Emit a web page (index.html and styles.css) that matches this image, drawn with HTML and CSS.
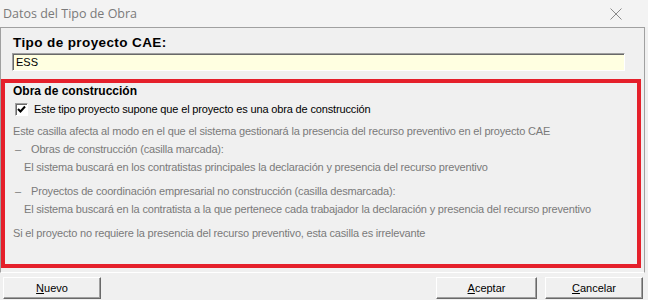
FILE: index.html
```html
<!DOCTYPE html>
<html lang="es">
<head>
    <meta charset="UTF-8">
    <title>Datos del Tipo de Obra</title>
    <link rel="stylesheet" href="styles.css">
</head>
<body>
<div class="window">
    <!--barra de titulo-->
    <div class="titlebar">
        <span class="title">Datos del Tipo de Obra</span>
        <svg class="close" width="12" height="12" viewBox="0 0 12 12">
            <path d="M0.5 0.5 L11.5 11.5 M11.5 0.5 L0.5 11.5" stroke="#8a8a8a" stroke-width="1" fill="none"/>
        </svg>
    </div>

    <div class="panel">
        <div class="field-label">Tipo de proyecto CAE:</div>
        <div class="field-input">ESS</div>

        <!--obra de construccion-->
        <div class="obra">
            <div class="obra-title">Obra de construcción</div>
            <label class="check-row">
                <span class="check">
                    <svg width="9" height="9" viewBox="0 0 9 9">
                        <path d="M1 4 L3.5 6.5 L8 1.5" stroke="#000" stroke-width="2" fill="none"/>
                    </svg>
                </span>
                Este tipo proyecto supone que el proyecto es una obra de construcción
            </label>
            <div class="help">
                <p>Este casilla afecta al modo en el que el sistema gestionará la presencia del recurso preventivo en el proyecto CAE</p>
                <div class="help-item">
                    <p><span class="dash">–</span>Obras de construcción (casilla marcada):</p>
                    <p class="sub">El sistema buscará en los contratistas principales la declaración y presencia del recurso preventivo</p>
                </div>
                <div class="help-item">
                    <p><span class="dash">–</span>Proyectos de coordinación empresarial no construcción (casilla desmarcada):</p>
                    <p class="sub">El sistema buscará en la contratista a la que pertenece cada trabajador la declaración y presencia del recurso preventivo</p>
                </div>
                <p class="last">Si el proyecto no requiere la presencia del recurso preventivo, esta casilla es irrelevante</p>
            </div>
        </div>
    </div>

    <div class="buttons">
        <button class="btn"><u>N</u>uevo</button>
        <span class="spacer"></span>
        <button class="btn btn-wide"><u>A</u>ceptar</button>
        <button class="btn"><u>C</u>ancelar</button>
    </div>
</div>
</body>
</html>
```

FILE: styles.css
```css
* {
    padding: 0;
    margin: 0;
    box-sizing: border-box;
}

body {
    width: 648px;
    height: 300px;
    overflow: hidden;
    background-color: #f0f0f0;
    font-family: "Liberation Sans", Arial, sans-serif;
    font-size: 11px;
    color: #000;
}

.window {
    width: 648px;
    height: 300px;
}

.titlebar {
    height: 27px;
    display: flex;
    align-items: center;
    justify-content: space-between;
    padding: 0 26px 0 3px;
    background-color: #f3f3f3;
}

.title {
    font-family: "Open Sans", sans-serif;
    font-size: 12.5px;
    color: #7a7a7a;
}

.panel {
    width: 645px;
    height: 246px;
    border: 1px solid #a0a0a0;
    border-bottom-color: #ffffff;
}

.field-label {
    margin: 5px 0 0 12px;
    height: 19px;
    line-height: 19px;
    font-size: 13.5px;
    font-weight: bold;
    letter-spacing: 0.4px;
}

.field-input {
    margin: 1px 0 0 11px;
    width: 613px;
    height: 18px;
    line-height: 16px;
    padding-left: 3px;
    background-color: #ffffe1;
    border: 1px solid;
    border-color: #a0a0a0 #ffffff #ffffff #a0a0a0;
    box-shadow: inset 1px 1px 0 #696969;
}

.obra {
    margin-top: 8px;
    width: 640px;
    height: 189px;
    border: 4px solid #e5202b;
    padding: 0 8px;
}

.obra-title {
    height: 16px;
    line-height: 16px;
    font-size: 12px;
    font-weight: bold;
}

.check-row {
    display: flex;
    align-items: center;
    height: 18px;
    margin-top: 1px;
    letter-spacing: -0.15px;
}

.check {
    width: 13px;
    height: 13px;
    margin: 0 6px 0 2px;
    display: flex;
    align-items: center;
    justify-content: center;
    background-color: #fff;
    border: 1px solid;
    border-color: #a0a0a0 #ffffff #ffffff #a0a0a0;
    box-shadow: inset 1px 1px 0 #696969;
}

.help {
    margin-top: 4px;
    color: #7a7a7a;
    line-height: 18px;
    letter-spacing: -0.18px;
}

.help-item {
    margin-bottom: 6px;
}

.dash {
    display: inline-block;
    width: 18px;
    padding-left: 2px;
}

.sub {
    padding-left: 11px;
}

.buttons {
    display: flex;
    gap: 8px;
    padding: 4px 5px 0 3px;
}

.spacer {
    flex: 1;
}

.btn {
    width: 98px;
    height: 22px;
    font-family: "Liberation Sans", Arial, sans-serif;
    font-size: 11px;
    color: #000;
    background-color: #f0f0f0;
    border: 1px solid;
    border-color: #ffffff #696969 #696969 #ffffff;
    box-shadow: inset -1px -1px 0 #a0a0a0;
}

.btn-wide {
    width: 101px;
}
```
